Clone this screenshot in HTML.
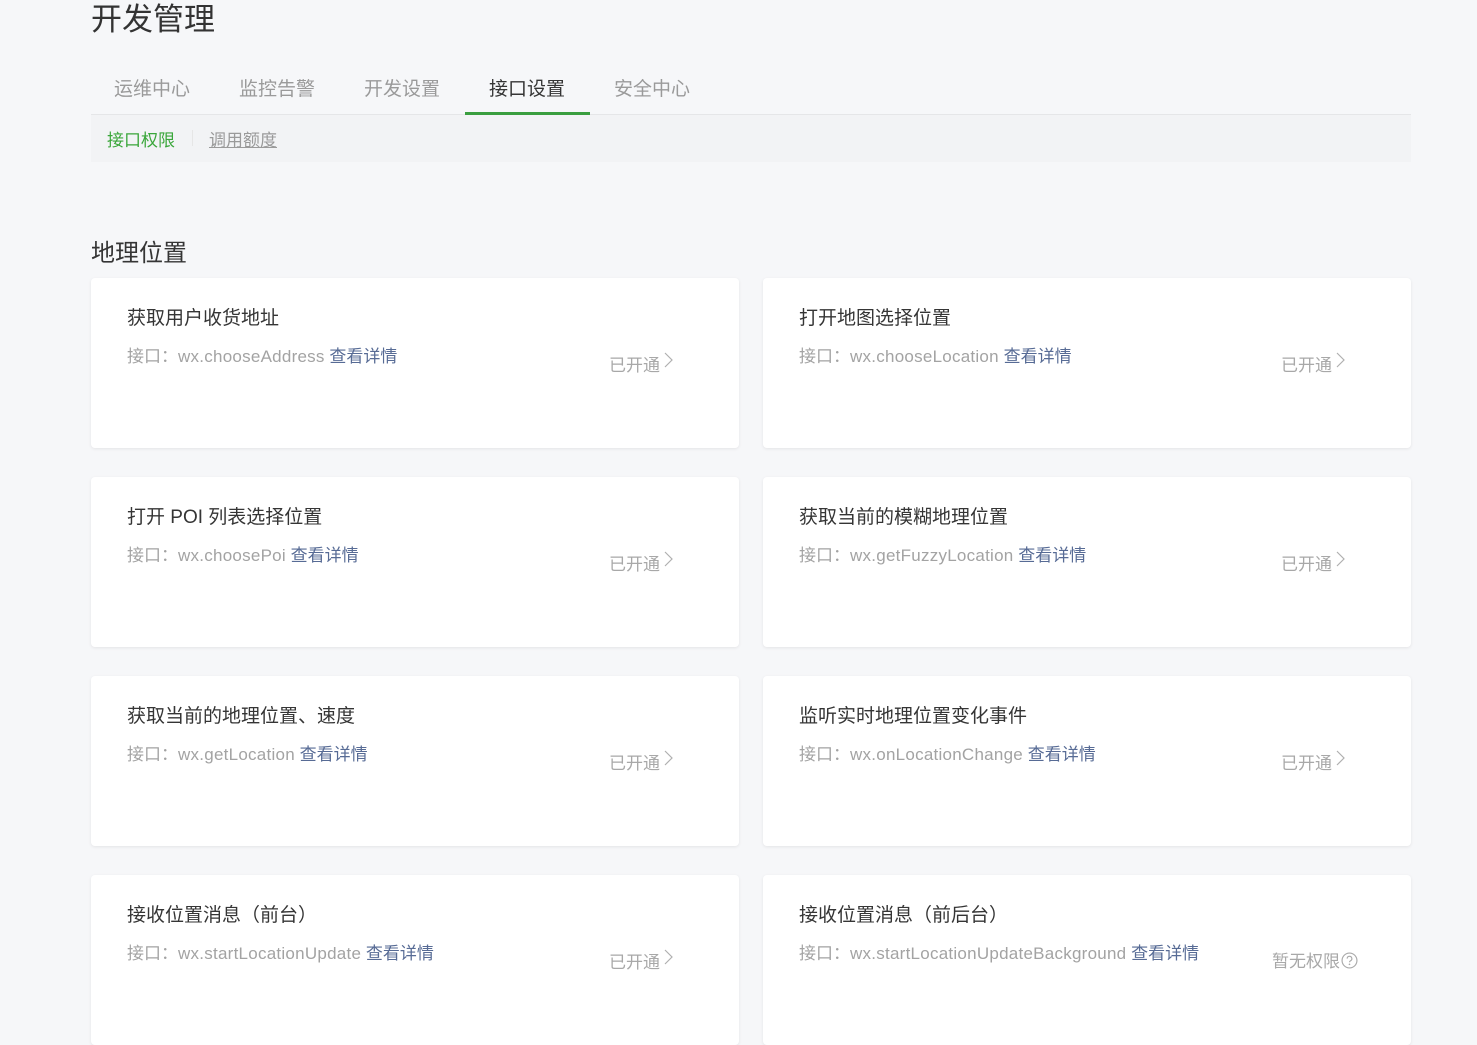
<!DOCTYPE html>
<html><head><meta charset="utf-8"><style>
*{margin:0;padding:0;box-sizing:border-box}
body{width:1477px;height:1044px;overflow:hidden;background:#f6f7f9;font-family:"Liberation Sans","Noto Sans CJK SC",sans-serif;position:relative}
.abs{position:absolute;white-space:nowrap}
h1{position:absolute;left:91px;top:0px;font-size:31px;font-weight:normal;color:#333;line-height:40px}
.tab{position:absolute;top:77px;font-size:19px;color:#9a9a9a;line-height:26px}
.tabline{position:absolute;left:91px;top:114px;width:1320px;height:1px;background:#e5e6e8}
.sub{position:absolute;left:91px;top:115px;width:1320px;height:47px;background:#f2f3f5}
.card{position:absolute;width:648px;height:170px;background:#fff;border-radius:4px;box-shadow:0 1px 3px rgba(0,0,0,.08)}
.t{position:absolute;left:36px;top:25px;font-size:19px;color:#353535;white-space:nowrap}
.i{position:absolute;left:36px;top:64px;font-size:17px;color:#a3a3a3;white-space:nowrap}
.i b{font-weight:normal;letter-spacing:.25px}
.i a{color:#576b95;text-decoration:none}
.s{position:absolute;left:518px;top:73px;font-size:17px;color:#a8a8a8;white-space:nowrap}
.s svg{vertical-align:3px;margin-left:4px}
</style></head><body>
<h1>开发管理</h1>
<div class="tab" style="left:114px">运维中心</div>
<div class="tab" style="left:239px">监控告警</div>
<div class="tab" style="left:364px">开发设置</div>
<div class="tab" style="left:489px;color:#353535">接口设置</div>
<div class="tab" style="left:614px">安全中心</div>
<div class="tabline"></div>
<div class="abs" style="left:465px;top:112px;width:125px;height:3px;background:#3a9e3f"></div>
<div class="sub"></div>
<div class="abs" style="left:107px;top:126px;font-size:17px;color:#3aa63a">接口权限</div>
<div class="abs" style="left:192px;top:130px;width:1px;height:16px;background:#e6e6e6"></div>
<div class="abs" style="left:209px;top:126px;font-size:17px;color:#9a9a9a;text-decoration:underline">调用额度</div>
<div class="abs" style="left:91px;top:233px;font-size:24px;color:#353535">地理位置</div>

<div class="card" style="left:91px;top:278px"><div class="t">获取用户收货地址</div><div class="i">接口：<b>wx.chooseAddress</b> <a>查看详情</a></div><div class="s">已开通<svg width="9" height="16" viewBox="0 0 9 16"><path d="M1 1l7 7-7 7" fill="none" stroke="#b0b0b0" stroke-width="1.2"/></svg></div></div>
<div class="card" style="left:763px;top:278px"><div class="t">打开地图选择位置</div><div class="i">接口：<b>wx.chooseLocation</b> <a>查看详情</a></div><div class="s">已开通<svg width="9" height="16" viewBox="0 0 9 16"><path d="M1 1l7 7-7 7" fill="none" stroke="#b0b0b0" stroke-width="1.2"/></svg></div></div>
<div class="card" style="left:91px;top:477px"><div class="t">打开 POI 列表选择位置</div><div class="i">接口：<b>wx.choosePoi</b> <a>查看详情</a></div><div class="s">已开通<svg width="9" height="16" viewBox="0 0 9 16"><path d="M1 1l7 7-7 7" fill="none" stroke="#b0b0b0" stroke-width="1.2"/></svg></div></div>
<div class="card" style="left:763px;top:477px"><div class="t">获取当前的模糊地理位置</div><div class="i">接口：<b>wx.getFuzzyLocation</b> <a>查看详情</a></div><div class="s">已开通<svg width="9" height="16" viewBox="0 0 9 16"><path d="M1 1l7 7-7 7" fill="none" stroke="#b0b0b0" stroke-width="1.2"/></svg></div></div>
<div class="card" style="left:91px;top:676px"><div class="t">获取当前的地理位置、速度</div><div class="i">接口：<b>wx.getLocation</b> <a>查看详情</a></div><div class="s">已开通<svg width="9" height="16" viewBox="0 0 9 16"><path d="M1 1l7 7-7 7" fill="none" stroke="#b0b0b0" stroke-width="1.2"/></svg></div></div>
<div class="card" style="left:763px;top:676px"><div class="t">监听实时地理位置变化事件</div><div class="i">接口：<b>wx.onLocationChange</b> <a>查看详情</a></div><div class="s">已开通<svg width="9" height="16" viewBox="0 0 9 16"><path d="M1 1l7 7-7 7" fill="none" stroke="#b0b0b0" stroke-width="1.2"/></svg></div></div>
<div class="card" style="left:91px;top:875px"><div class="t">接收位置消息（前台）</div><div class="i">接口：<b>wx.startLocationUpdate</b> <a>查看详情</a></div><div class="s">已开通<svg width="9" height="16" viewBox="0 0 9 16"><path d="M1 1l7 7-7 7" fill="none" stroke="#b0b0b0" stroke-width="1.2"/></svg></div></div>
<div class="card" style="left:763px;top:875px"><div class="t">接收位置消息（前后台）</div><div class="i">接口：<b>wx.startLocationUpdateBackground</b> <a>查看详情</a></div><div class="s" style="left:509px;top:72px">暂无权限<svg width="17" height="17" viewBox="0 0 16 16" style="margin-left:1px;vertical-align:-2px"><circle cx="8" cy="8" r="7" fill="none" stroke="#aaa" stroke-width="1.1"/><path d="M5.8 6.2a2.2 2.2 0 1 1 3.2 2c-.7.4-1 .8-1 1.5" fill="none" stroke="#aaa" stroke-width="1.1"/><circle cx="8" cy="11.6" r=".8" fill="#aaa"/></svg></div></div>
</body></html>
